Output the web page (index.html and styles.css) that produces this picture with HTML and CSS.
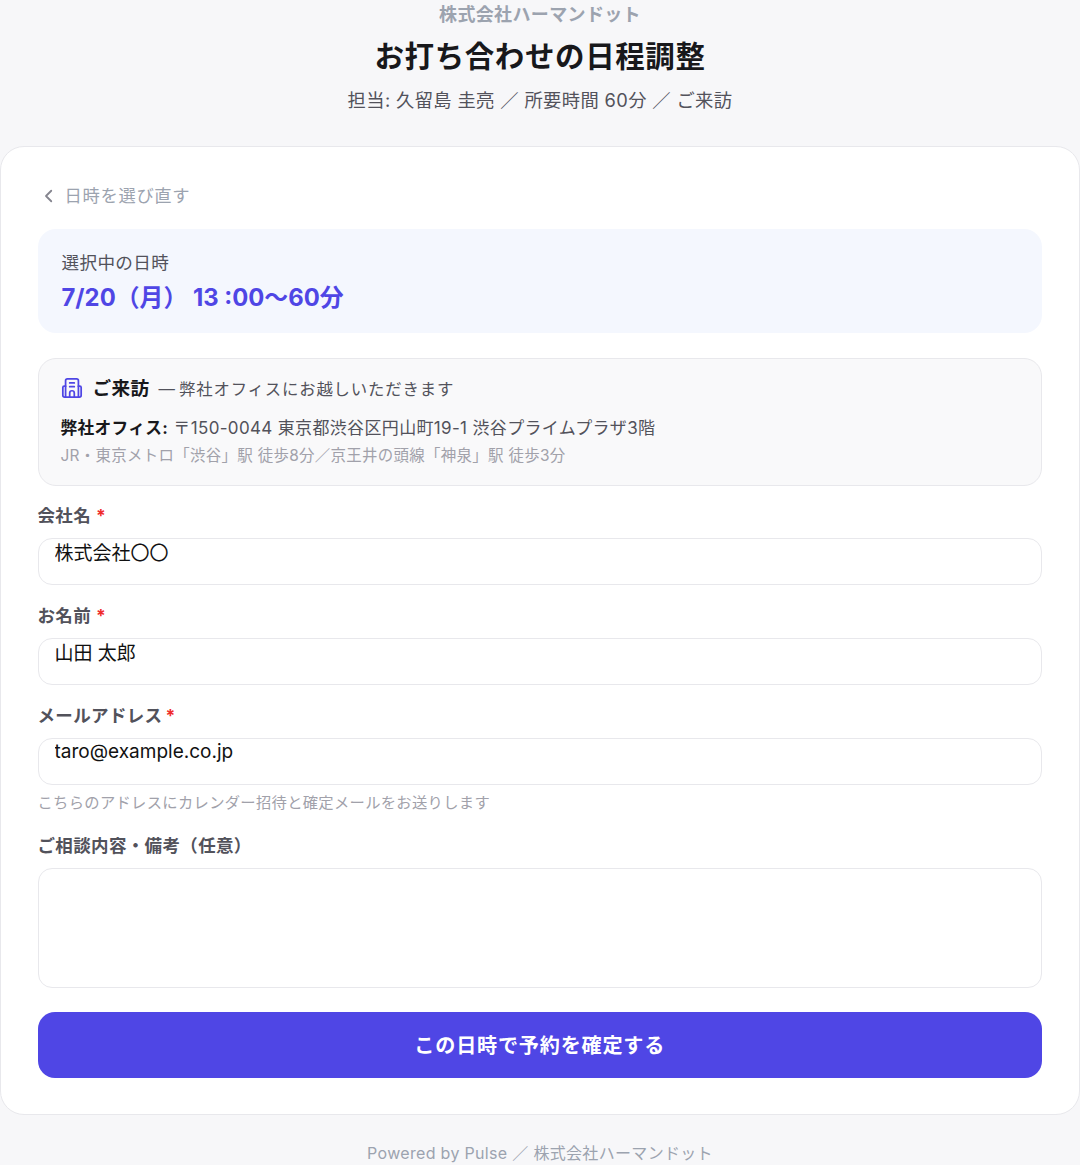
FILE: index.html
```html
<!DOCTYPE html>
<html lang="ja">
<head>
<meta charset="utf-8">
<title>お打ち合わせの日程調整</title>
<link rel="stylesheet" href="styles.css">
</head>
<body>
<header class="header">
  <div class="org">株式会社ハーマンドット</div>
  <h1 class="title">お打ち合わせの日程調整</h1>
  <p class="meta">担当: 久留島 圭亮 ／ 所要時間 60分 ／ ご来訪</p>
</header>
<main class="card">
  <a class="back" href="#">
    <svg class="back-icon" viewBox="0 0 24 24" fill="none" stroke="currentColor" stroke-width="2.4" stroke-linecap="round" stroke-linejoin="round"><path d="M15 5l-7 7 7 7"/></svg>
    <span>日時を選び直す</span>
  </a>
  <section class="selected">
    <div class="selected-label">選択中の日時</div>
    <div class="selected-value">7/20（月） 13 :00〜60分</div>
  </section>
  <section class="visit">
    <div class="visit-head">
      <svg class="visit-icon" viewBox="0 0 24 24" fill="none" stroke="currentColor" stroke-width="1.9" stroke-linecap="round" stroke-linejoin="round"><path d="M5 22V4a2 2 0 0 1 2-2h10a2 2 0 0 1 2 2v18"/><path d="M5 10H3.5A1.5 1.5 0 0 0 2 11.500V20a2 2 0 0 0 2 2h16a2 2 0 0 0 2-2v-8.500A1.500 1.500 0 0 0 20.500 10H19"/><path d="M9.500 6.500h5M9.500 10.500h5M9.500 22v-4.500a2.500 2.500 0 0 1 5 0V22"/></svg>
      <strong class="visit-title">ご来訪</strong>
      <span class="visit-note">— 弊社オフィスにお越しいただきます</span>
    </div>
    <div class="visit-address"><strong>弊社オフィス:</strong> 〒150-0044 東京都渋谷区円山町19-1 渋谷プライムプラザ3階</div>
    <div class="visit-access">JR・東京メトロ「渋谷」駅 徒歩8分／京王井の頭線「神泉」駅 徒歩3分</div>
  </section>
  <form class="form">
    <div class="field">
      <label class="label">会社名<span class="req">*</span></label>
      <input class="input" type="text" value="株式会社〇〇">
    </div>
    <div class="field">
      <label class="label">お名前<span class="req">*</span></label>
      <input class="input" type="text" value="山田 太郎">
    </div>
    <div class="field">
      <label class="label">メールアドレス<span class="req req-tight">*</span></label>
      <input class="input" type="text" value="taro@example.co.jp">
      <div class="hint">こちらのアドレスにカレンダー招待と確定メールをお送りします</div>
    </div>
    <div class="field">
      <label class="label">ご相談内容・備考（任意）</label>
      <textarea class="textarea"></textarea>
    </div>
    <button class="submit" type="button">この日時で予約を確定する</button>
  </form>
</main>
<footer class="footer">Powered by Pulse ／ 株式会社ハーマンドット</footer>
</body>
</html>
```
FILE: styles.css
```css
* { box-sizing: border-box; }
html, body { margin: 0; padding: 0; }
body {
  height: 1165px;
  overflow: hidden;
  background: #f7f7f9;
  font-family: Inter, "Noto Sans CJK JP", sans-serif;
  color: #111827;
}
.header { text-align: center; height: 146px; padding-top: 3px; }
.org { font-size: 18px; line-height: 24px; font-weight: 700; color: #9ca3af; letter-spacing: 0.02em; }
.title { margin: 10px 0 0; font-size: 29.5px; line-height: 38px; font-weight: 700; color: #18181b; letter-spacing: 0.02em; }
.meta { margin: 12px 0 0; font-size: 18.3px; line-height: 26px; color: #52525b; letter-spacing: 0.02em; }
.card {
  height: 969px;
  background: #fff;
  border: 1.5px solid #e8e8ec;
  border-radius: 24px;
  padding: 34px 37px 36px 36.5px;
  display: flex;
  flex-direction: column;
}
.back { display: flex; align-items: center; gap: 7px; height: 26px; color: #9ca3af; text-decoration: none; font-size: 17.3px; letter-spacing: 0.04em; padding-left: 2px; }
.back-icon { width: 18px; height: 18px; color: #85858f; margin-top: 3px; }
.selected { margin-top: 22px; height: 104px; padding: 21px 24px; background: #f4f7fe; border-radius: 18px; }
.selected-label { font-size: 17.6px; line-height: 26px; color: #52525b; letter-spacing: 0.02em; }
.selected-value { margin-top: 5px; font-size: 23.85px; line-height: 34px; font-weight: 700; color: #4f46e5; }
.visit { margin-top: 25px; height: 128px; padding: 15px 22px; background: #f9f9fa; border: 1.5px solid #e8e8ec; border-radius: 18px; }
.visit-head { display: flex; align-items: center; height: 28px; }
.visit-icon { width: 22px; height: 22px; color: #4f46e5; flex: none; }
.visit-title { margin-left: 10px; font-size: 18.6px; line-height: 26px; color: #18181b; letter-spacing: 0.02em; }
.visit-note { margin-left: 9px; font-size: 16.4px; color: #52525b; letter-spacing: 0.05em; word-spacing: -2px; }
.visit-address { margin-top: 13px; font-size: 17px; line-height: 26px; color: #52525b; letter-spacing: 0.02em; }
.visit-address strong { color: #18181b; font-size: 16.7px; }
.visit-access { margin-top: 4px; font-size: 15.45px; line-height: 22px; color: #a1a1aa; letter-spacing: 0.02em; }
.form { display: flex; flex-direction: column; }
.field { display: flex; flex-direction: column; margin-top: 17px; }
.field + .field { margin-top: 18px; }
.label { font-size: 17.5px; line-height: 26px; font-weight: 700; color: #52525b; letter-spacing: 0.02em; margin-bottom: 9px; }
.req { color: #ef2b2b; margin-left: 5px; }
.req-tight { margin-left: 3px; }
.input {
  height: 47px;
  width: 100%;
  padding: 0 16px 21px;
  border: 1.5px solid #e8e8ec;
  border-radius: 14px;
  background: #fff;
  font: inherit;
  font-size: 19px;
  color: #111;
  outline: none;
}
.hint { margin-top: 7px; font-size: 15.3px; line-height: 22px; color: #a1a1aa; letter-spacing: 0.02em; }
.field:has(.hint) + .field { margin-top: 19px; }
.textarea { height: 120px; width: 100%; border: 1.5px solid #e8e8ec; border-radius: 14px; background: #fff; resize: none; outline: none; }
.submit {
  margin-top: 24px;
  height: 66px;
  padding-bottom: 2px;
  border: 0;
  border-radius: 17px;
  background: #4f46e5;
  color: #fff;
  font: inherit;
  font-size: 20.1px;
  font-weight: 700;
  letter-spacing: 0.04em;
}
.footer { padding-top: 26px; text-align: center; font-size: 16px; line-height: 24px; color: #9ca3af; letter-spacing: 0.02em; }
```
